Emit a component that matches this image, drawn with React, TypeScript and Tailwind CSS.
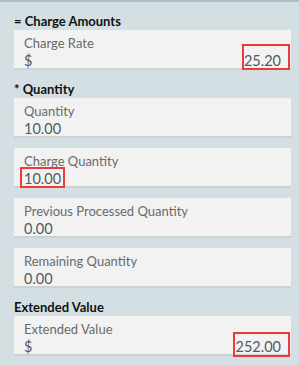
import React from "react";

type Field = {
     label: string;
     value: string;
     prefix?: string;
     mark?: "rate" | "qty" | "ext";
};

const sections: { title: string; fields: Field[] }[] = [
     {
          title: "= Charge Amounts",
          fields: [{ label: "Charge Rate", prefix: "$", value: "25.20", mark: "rate" }],
     },
     {
          title: "* Quantity",
          fields: [
               { label: "Quantity", value: "10.00" },
               { label: "Charge Quantity", value: "10.00", mark: "qty" },
               { label: "Previous Processed Quantity", value: "0.00" },
               { label: "Remaining Quantity", value: "0.00" },
          ],
     },
     {
          title: "Extended Value",
          fields: [{ label: "Extended Value", prefix: "$", value: "252.00", mark: "ext" }],
     },
];

function FieldCard({ f }: { f: Field }) {
     return (
          <div className="relative h-[40px] bg-[#f2f2f2] border-b-2 border-[#cdd1d2] px-[10px] pt-[5px]">
               <div className="text-[13px] leading-[16px] text-[#6a6a6a] mb-[2px]">{f.label}</div>
               <div className="flex justify-between text-[14.5px] leading-[16px] text-[#555a60]">
                    {f.prefix && <span>{f.prefix}</span>}
                    <span>{f.value}</span>
               </div>

               {/* red annotation boxes */}
               {f.mark === "rate" && (
                    <div className="absolute right-[1px] top-[14px] w-[48px] h-[26px] border-2 border-[#ee3a3a]" />
               )}
               {f.mark === "qty" && (
                    <div className="absolute left-[6px] top-[19px] w-[45px] h-[21px] border-2 border-[#ee3a3a]" />
               )}
               {f.mark === "ext" && (
                    <div className="absolute right-[1px] top-[16px] w-[57px] h-[25px] border-2 border-[#ee3a3a]" />
               )}
          </div>
     );
}

export default function App() {
     return (
          <div
               className="w-[299px] h-[365px] overflow-hidden bg-[#d3dfe3] border-t-2 border-[#a9c2ca] pl-[14px] pr-[8px]"
               style={{ fontFamily: "Lato, 'Noto Sans', sans-serif" }}
          >
               {sections.map((s) => (
                    <div key={s.title} className="mt-[10px]">
                         <div className="text-[13px] leading-[18px] font-bold text-[#111]">{s.title}</div>
                         <div className="flex flex-col gap-[10px]">
                              {s.fields.map((f) => (
                                   <FieldCard key={f.label} f={f} />
                              ))}
                         </div>
                    </div>
               ))}
          </div>
     );
}
